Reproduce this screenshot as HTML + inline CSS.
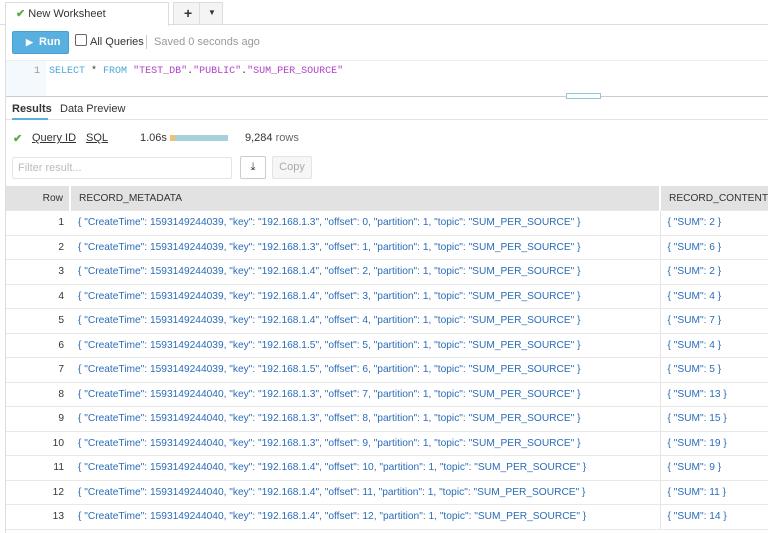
<!DOCTYPE html>
<html><head><style>
*{box-sizing:border-box;margin:0;padding:0}
body{width:768px;height:533px;overflow:hidden;background:#fff;font-family:"Liberation Sans",sans-serif;font-size:11px;color:#333;position:relative}
.abs{position:absolute}
.top{left:0;top:0;width:768px;height:25px;background:#fff;border-bottom:1px solid #ddd}
.tab{left:5px;top:2px;width:164px;height:24px;background:#fff;border:1px solid #ddd;border-bottom:none;font-size:11px;line-height:22px;padding-left:10px;color:#333}
.tab2{left:173px;top:2px;width:50px;height:22px;background:#f4f4f4;border:1px solid #ddd;border-bottom:none}
.panel{left:5px;top:25px;width:763px;height:508px;border-left:1px solid #ddd}
.run{left:12px;top:31px;width:57px;height:23px;background:#58b0e0;border:1px solid #4a9fd0;border-radius:2px;color:#fff;font-size:11px;font-weight:bold;line-height:21px;padding-left:13px}
.editor{left:6px;top:60px;width:762px;height:37px;border-top:1px solid #eee;border-bottom:1px solid #ccc}
.gut{left:6px;top:61px;width:40px;height:35px;background:#f3f9fc}
.code{left:49px;top:66px;font-family:"Liberation Mono",monospace;font-size:10px}
.tabs2{left:6px;top:98px;width:762px;height:22px;border-bottom:1px solid #e4e4e4}
table{position:absolute;left:6px;top:186px;border-collapse:collapse;width:762px;table-layout:fixed}
td,th{height:24.5px;border-bottom:1px solid #e8e8e8;font-size:10.2px;font-weight:normal;white-space:nowrap;overflow:hidden}
th{background:#e2e2e2;color:#333;text-align:left;padding-left:8px;border-right:2px solid #fff}
td{color:#2a6cb8;padding-left:8px}
td.n{color:#333;text-align:right;padding-right:6px;padding-left:0}
th.n{text-align:right;padding-right:6px}
td.c{border-left:1px solid #e4e4e4;padding-left:7px}
</style></head><body>
<div class="abs top"></div>
<div class="abs tab"><span style="color:#5aa846;font-weight:bold">✔</span> New Worksheet</div>
<div class="abs tab2"><span class="abs" style="left:10px;top:2px;font-size:14px;font-weight:bold">+</span><span class="abs" style="left:25px;top:0;width:1px;height:22px;background:#ddd"></span><span class="abs" style="left:34px;top:5px;font-size:8px">▼</span></div>
<div class="abs panel"></div>
<div class="abs run"><span style="font-size:9px">▶</span>&nbsp; Run</div>
<div class="abs" style="left:75px;top:34px;width:12px;height:12px;border:1px solid #666;border-radius:2px"></div>
<div class="abs" style="left:90px;top:36px">All Queries</div>
<div class="abs" style="left:146px;top:35px;width:1px;height:14px;background:#ccc"></div>
<div class="abs" style="left:154px;top:36px;color:#999">Saved 0 seconds ago</div>
<div class="abs editor"></div>
<div class="abs gut"></div>
<div class="abs" style="left:34px;top:66px;font-family:'Liberation Mono',monospace;font-size:10px;color:#999">1</div>
<div class="abs code"><span style="color:#4aa8d8">SELECT</span> * <span style="color:#4aa8d8">FROM</span> <span style="color:#b040c8">"TEST_DB"</span>.<span style="color:#b040c8">"PUBLIC"</span>.<span style="color:#b040c8">"SUM_PER_SOURCE"</span></div>
<div class="abs" style="left:566px;top:93px;width:35px;height:6px;border:1px solid #8cc8e0;background:#fff"></div>
<div class="abs tabs2"></div>
<div class="abs" style="left:12px;top:103px;font-weight:bold">Results</div>
<div class="abs" style="left:12px;top:118px;width:36px;height:2px;background:#58b0e0"></div>
<div class="abs" style="left:60px;top:103px">Data Preview</div>
<div class="abs" style="left:13px;top:132px;color:#5aa846;font-weight:bold">✔</div>
<div class="abs" style="left:32px;top:132px;text-decoration:underline">Query ID</div>
<div class="abs" style="left:86px;top:132px;text-decoration:underline">SQL</div>
<div class="abs" style="left:140px;top:132px">1.06s</div>
<div class="abs" style="left:170px;top:135px;width:5px;height:6px;background:#f0c070"></div>
<div class="abs" style="left:175px;top:135px;width:53px;height:6px;background:#a8d0dc"></div>
<div class="abs" style="left:245px;top:132px">9,284 <span style="color:#666">rows</span></div>
<div class="abs" style="left:12px;top:157px;width:220px;height:22px;border:1px solid #e4e4e4;border-radius:2px;color:#bbb;padding:4px 5px">Filter result...</div>
<div class="abs" style="left:240px;top:156px;width:26px;height:23px;border:1px solid #ccc;border-radius:2px;text-align:center;line-height:21px;font-size:11px">⤓</div>
<div class="abs" style="left:272px;top:156px;width:40px;height:23px;border:1px solid #e4e4e4;background:#f6f6f6;border-radius:2px;text-align:center;line-height:21px;color:#aaa">Copy</div>
<table>
<colgroup><col style="width:64px"><col style="width:590px"><col style="width:108px"></colgroup>
<tr><th class="n">Row</th><th>RECORD_METADATA</th><th style="border-right:none">RECORD_CONTENT</th></tr>
<tr><td class="n">1</td><td>{ "CreateTime": 1593149244039, "key": "192.168.1.3", "offset": 0, "partition": 1, "topic": "SUM_PER_SOURCE" }</td><td class="c">{ "SUM": 2 }</td></tr>
<tr><td class="n">2</td><td>{ "CreateTime": 1593149244039, "key": "192.168.1.3", "offset": 1, "partition": 1, "topic": "SUM_PER_SOURCE" }</td><td class="c">{ "SUM": 6 }</td></tr>
<tr><td class="n">3</td><td>{ "CreateTime": 1593149244039, "key": "192.168.1.4", "offset": 2, "partition": 1, "topic": "SUM_PER_SOURCE" }</td><td class="c">{ "SUM": 2 }</td></tr>
<tr><td class="n">4</td><td>{ "CreateTime": 1593149244039, "key": "192.168.1.4", "offset": 3, "partition": 1, "topic": "SUM_PER_SOURCE" }</td><td class="c">{ "SUM": 4 }</td></tr>
<tr><td class="n">5</td><td>{ "CreateTime": 1593149244039, "key": "192.168.1.4", "offset": 4, "partition": 1, "topic": "SUM_PER_SOURCE" }</td><td class="c">{ "SUM": 7 }</td></tr>
<tr><td class="n">6</td><td>{ "CreateTime": 1593149244039, "key": "192.168.1.5", "offset": 5, "partition": 1, "topic": "SUM_PER_SOURCE" }</td><td class="c">{ "SUM": 4 }</td></tr>
<tr><td class="n">7</td><td>{ "CreateTime": 1593149244039, "key": "192.168.1.5", "offset": 6, "partition": 1, "topic": "SUM_PER_SOURCE" }</td><td class="c">{ "SUM": 5 }</td></tr>
<tr><td class="n">8</td><td>{ "CreateTime": 1593149244040, "key": "192.168.1.3", "offset": 7, "partition": 1, "topic": "SUM_PER_SOURCE" }</td><td class="c">{ "SUM": 13 }</td></tr>
<tr><td class="n">9</td><td>{ "CreateTime": 1593149244040, "key": "192.168.1.3", "offset": 8, "partition": 1, "topic": "SUM_PER_SOURCE" }</td><td class="c">{ "SUM": 15 }</td></tr>
<tr><td class="n">10</td><td>{ "CreateTime": 1593149244040, "key": "192.168.1.3", "offset": 9, "partition": 1, "topic": "SUM_PER_SOURCE" }</td><td class="c">{ "SUM": 19 }</td></tr>
<tr><td class="n">11</td><td>{ "CreateTime": 1593149244040, "key": "192.168.1.4", "offset": 10, "partition": 1, "topic": "SUM_PER_SOURCE" }</td><td class="c">{ "SUM": 9 }</td></tr>
<tr><td class="n">12</td><td>{ "CreateTime": 1593149244040, "key": "192.168.1.4", "offset": 11, "partition": 1, "topic": "SUM_PER_SOURCE" }</td><td class="c">{ "SUM": 11 }</td></tr>
<tr><td class="n">13</td><td>{ "CreateTime": 1593149244040, "key": "192.168.1.4", "offset": 12, "partition": 1, "topic": "SUM_PER_SOURCE" }</td><td class="c">{ "SUM": 14 }</td></tr>
</table>
</body></html>
